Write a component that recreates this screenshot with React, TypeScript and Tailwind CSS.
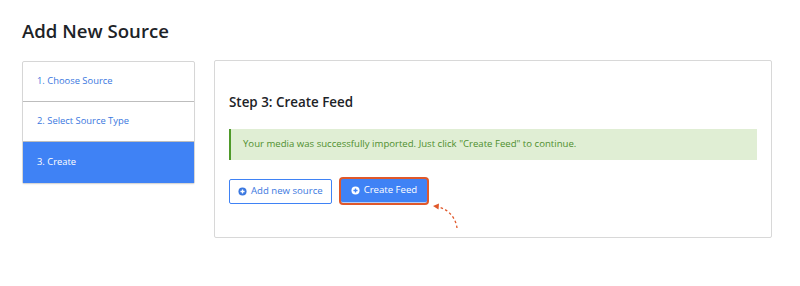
function PlusDot({ className, fg = 'white' }: { className?: string; fg?: string }) {
    return (
        <svg viewBox="0 0 10 10" className={className}>
            <circle cx="5" cy="5" r="4.5" fill="currentColor" />
            <path d="M5 2.7v4.6M2.7 5h4.6" stroke={fg} strokeWidth="1.5" />
        </svg>
    )
}

const steps = ['1. Choose Source', '2. Select Source Type', '3. Create']

export default function App() {
    return (
        <div
            className="w-[800px] h-[286px] bg-white px-[22px] pt-[17px]"
            style={{ fontFamily: '"Open Sans", sans-serif' }}
        >
            <h1 className="text-[18.6px] leading-[28px] font-semibold text-[#1d2327]">
                Add New Source
            </h1>
            <div className="flex gap-[19px] mt-[16px] items-start">
                <div className="w-[173px] border border-[#d6d6d6] rounded-[2px] bg-white shadow-[0_1px_1px_rgba(0,0,0,0.04)]">
                    {steps.map((s, i) => (
                        <div
                            key={s}
                            className={
                                i === 2
                                    ? 'h-[41px] flex items-center px-[14px] text-[9.4px] font-medium text-white bg-[#3f82f5]'
                                    : 'h-[40px] flex items-center px-[14px] text-[9.4px] font-medium text-[#3b78e0] border-b border-[#bdbdbd]'
                            }
                        >
                            {s}
                        </div>
                    ))}
                </div>
                <div className="flex-1 h-[178px] -mt-[1px] mr-[6px] border border-[#d8d8d8] rounded-[2px] px-[14px] pt-[31px]">
                    <h2 className="text-[13.4px] leading-[20px] font-semibold text-[#1d2327]">
                        Step 3: Create Feed
                    </h2>
                    <div className="mt-[17px] h-[31px] bg-[#e0eed4] border-l-[2px] border-[#4f9a2a] flex items-center pl-[12px] text-[9.6px] text-[#4f8f2e] font-medium">
                        Your media was successfully imported. Just click "Create Feed" to continue.
                    </div>
                    <div className="flex items-center gap-[7px] mt-[17px]">
                        <button className="h-[25px] px-[8px] flex items-center gap-[4px] border border-[#3f82f5] rounded-[2px] text-[9.6px] text-[#3b78e0] bg-white">
                            <PlusDot className="w-[9px] h-[9px]" />
                            Add new source
                        </button>
                        <div className="relative p-[2px] bg-[#e0582a] rounded-[4px]">
                            <button className="h-[24px] px-[10px] flex items-center gap-[4px] bg-[#3f82f5] rounded-[2px] text-[9.6px] text-white border-b border-white/60">
                                <PlusDot className="w-[9px] h-[9px] text-white" fg="#3f82f5" />
                                Create Feed
                            </button>
                            <svg
                                className="absolute left-[92px] top-[22px] w-[30px] h-[32px]"
                                viewBox="0 0 30 32"
                            >
                                <path
                                    d="M26 29 C 25 20, 18 10, 7 8"
                                    fill="none"
                                    stroke="#e0582a"
                                    strokeWidth="1.3"
                                    strokeDasharray="2.5 2.5"
                                />
                                <path d="M2 7 L8 4.5 L7.5 10.5 Z" fill="#e0582a" />
                            </svg>
                        </div>
                    </div>
                </div>
            </div>
        </div>
    )
}
